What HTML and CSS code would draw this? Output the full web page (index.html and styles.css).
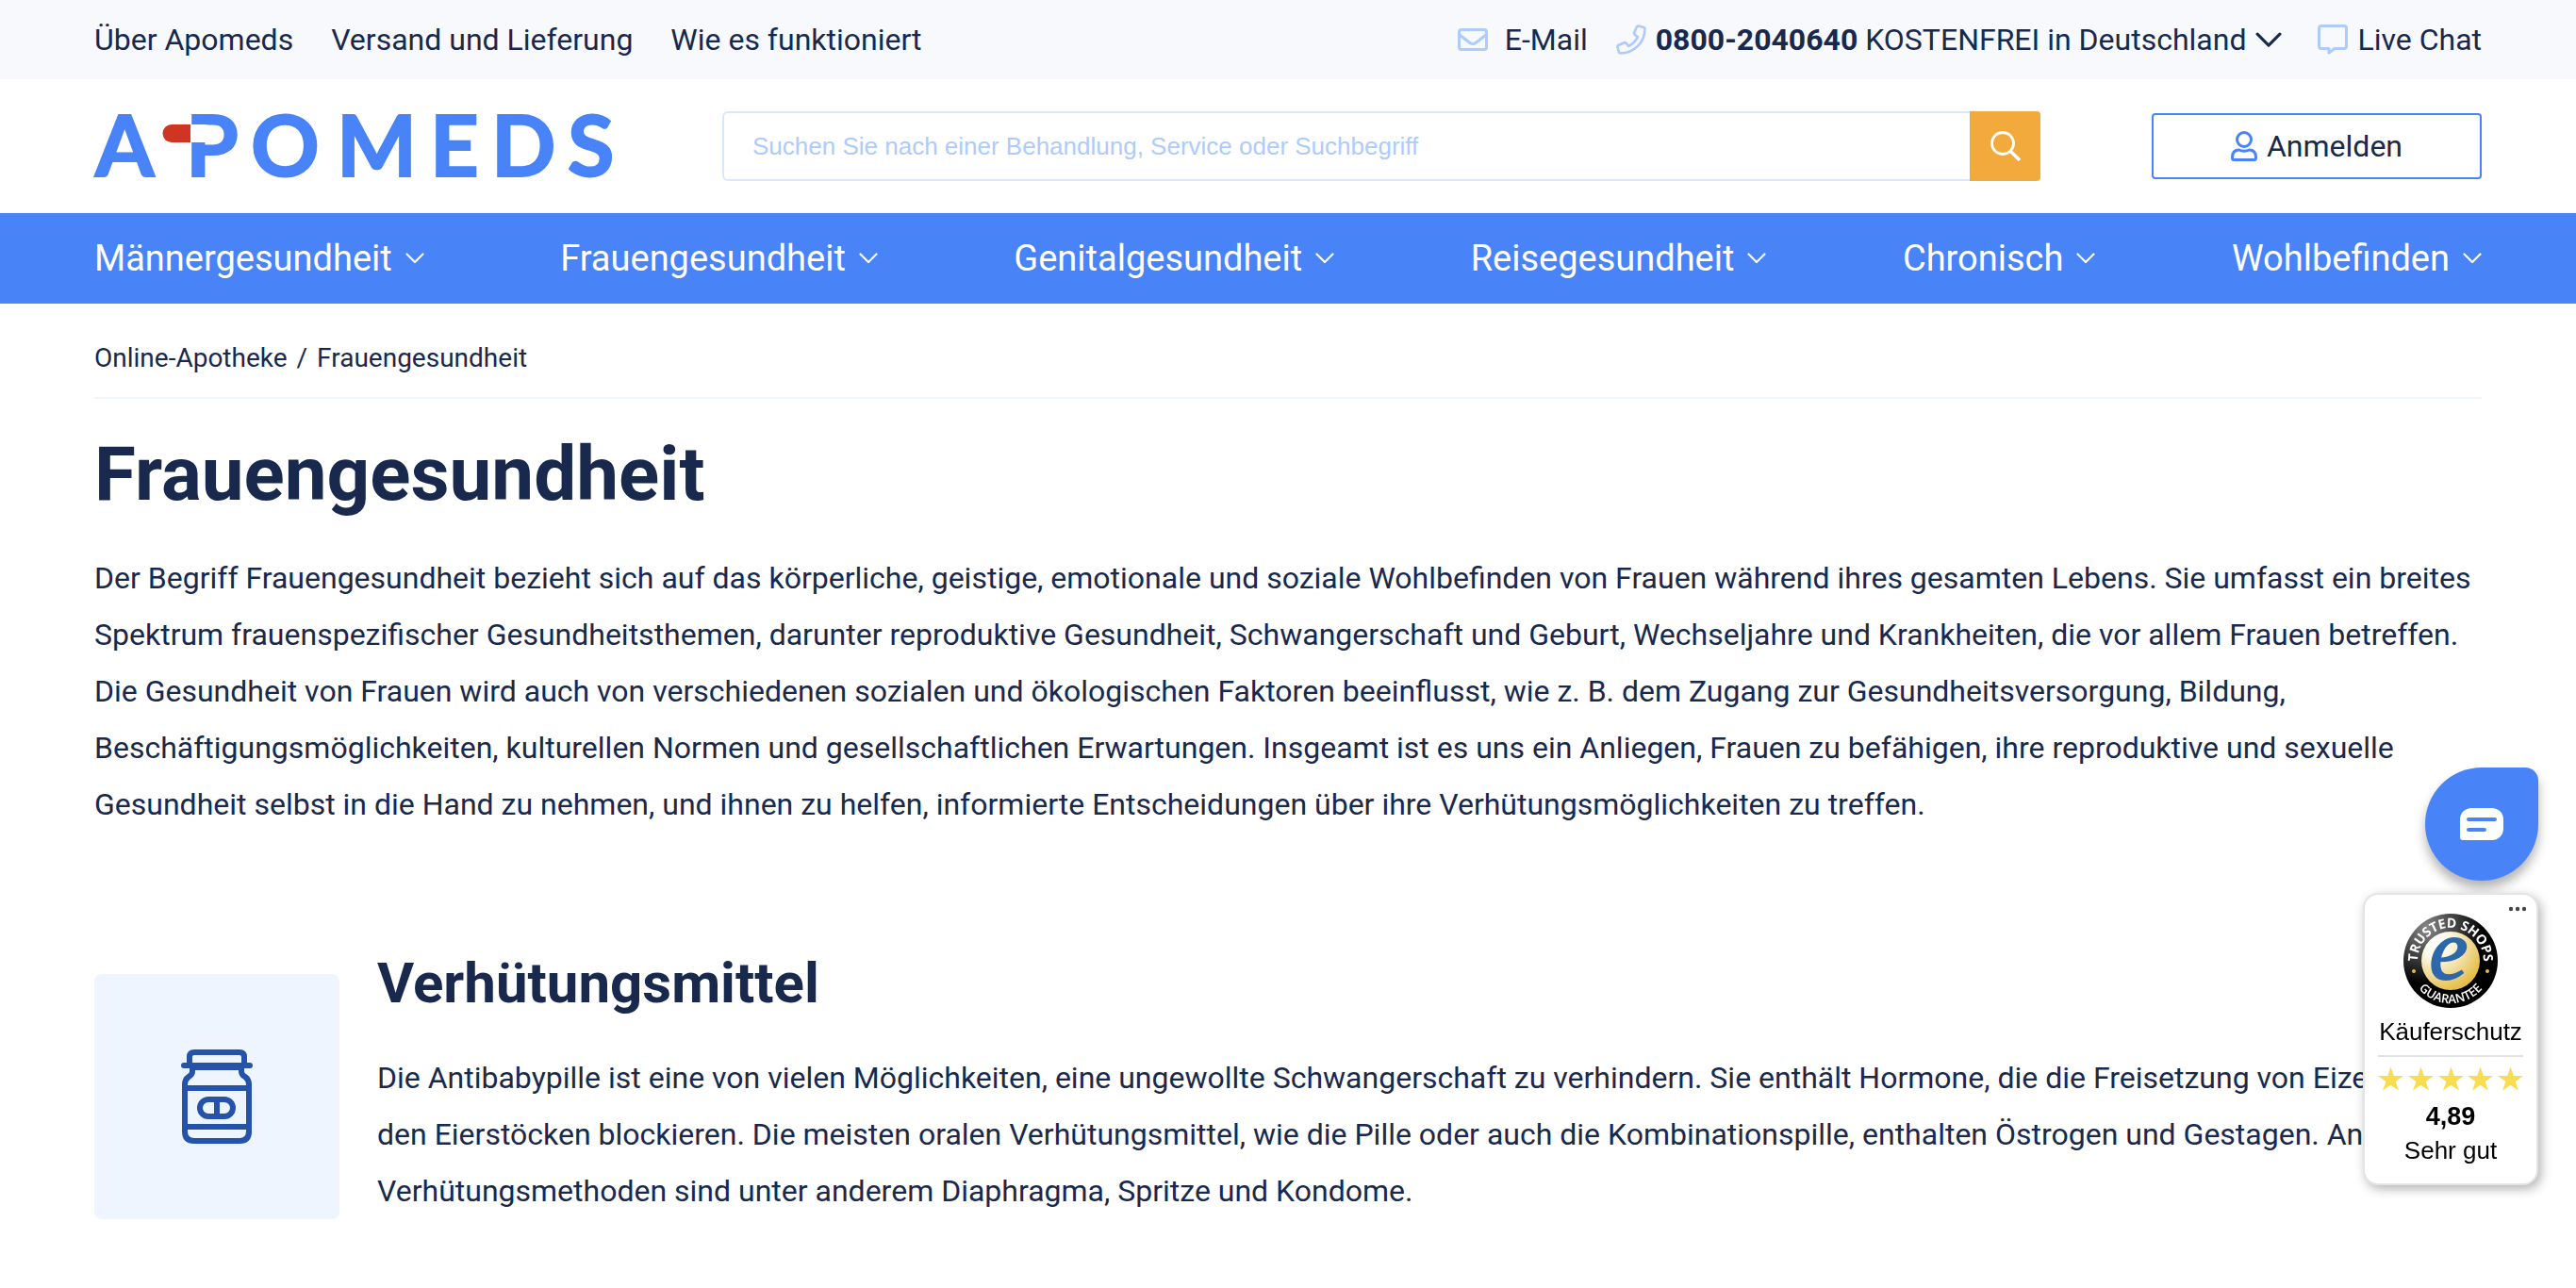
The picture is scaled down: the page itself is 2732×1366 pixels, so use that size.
FILE: index.html
```html
<!DOCTYPE html>
<html lang="de">
<head>
<meta charset="utf-8">
<meta name="viewport" content="width=device-width, initial-scale=1">
<title>Frauengesundheit | Apomeds</title>
<link rel="stylesheet" href="styles.css">
</head>
<body>
<svg class="sprite" aria-hidden="true">
  <symbol id="chevron" viewBox="0 0 20 12"><path d="M1.500 1.500L10 10l8.500-8.500" fill="none" stroke="currentColor" stroke-width="2.200" stroke-linecap="round" stroke-linejoin="round"/></symbol>
  <symbol id="star" viewBox="0 0 28 26"><path fill="#f9dc4f" d="M14 0l3.400 9.900H28l-8.600 6.200L22.700 26 14 19.900 5.300 26l3.300-9.900L0 9.900h10.600z"/></symbol>
</svg>
<header>
  <div class="topbar">
    <nav class="links" aria-label="Service">
      <a href="#">Über Apomeds</a>
      <a href="#">Versand und Lieferung</a>
      <a href="#">Wie es funktioniert</a>
    </nav>
    <div class="contact">
      <a class="mail" href="#">
        <svg width="32" height="24" viewBox="0 0 32 24" fill="none" stroke="currentColor" stroke-width="3"><rect x="1.500" y="1.500" width="29" height="21" rx="2.500"/><path d="M2 7l11 8.500q3 2 6 0L30 7"/></svg>
        E-Mail
      </a>
      <button class="phone" type="button">
        <svg width="32" height="32" viewBox="0 0 32 32" fill="none" stroke="currentColor" stroke-width="2.600" stroke-linejoin="round"><path d="M23.500 1.500l6 1.500q1 .3 1 1.500C30.500 19 19 30.500 4.500 30.500q-1.200 0-1.500-1l-1.500-6q-.2-1 .8-1.500l6.500-2.800q1-.4 1.600.4l2.800 3.400a22 22 0 0 0 9.800-9.800l-3.400-2.800q-.8-.6-.4-1.600L22 2.300q.4-1 1.500-.8z"/></svg>
        <span><b>0800-2040640</b> KOSTENFREI in Deutschland</span>
        <svg class="dark" width="28" height="17"><use href="#chevron"/></svg>
      </button>
      <a class="chat" href="#">
        <svg width="32" height="32" viewBox="0 0 32 32" fill="none" stroke="currentColor" stroke-width="3" stroke-linejoin="round"><path d="M4 1.500h24q2.500 0 2.500 2.500v19q0 2.500-2.500 2.500H18l-6 4.500v-4.500H4q-2.500 0-2.500-2.500V4Q1.500 1.500 4 1.500z"/></svg>
        Live Chat
      </a>
    </div>
  </div>
  <div class="masthead">
    <a class="logo" href="#" aria-label="Apomeds">
      <svg width="550" height="72" viewBox="0 0 550 72">
        <text class="wordmark" y="68" x="1 97 166 257 356 421 502">APOMEDS</text>
        <path fill="#fff" d="M101 13h16a9.500 9.500 0 0 1 0 19h-16z"/>
        <path fill="#cf3520" d="M102 13v19H82a9.500 9.500 0 0 1 0-19z"/>
      </svg>
    </a>
    <form class="search" role="search">
      <input type="search" aria-label="Suche" placeholder="Suchen Sie nach einer Behandlung, Service oder Suchbegriff">
      <button type="submit" aria-label="Suchen"><svg width="32" height="32" viewBox="0 0 32 32" fill="none" stroke="currentColor" stroke-width="2.800"><circle cx="13" cy="13" r="11.500"/><path stroke-width="3.400" d="M21.500 21.500l9.500 9.500"/></svg></button>
    </form>
    <button class="login" type="button">
      <svg width="28" height="32" viewBox="0 0 28 32" fill="none" stroke="currentColor" stroke-width="3"><circle cx="14" cy="9" r="7.500"/><path d="M8.500 20q5.500 2.500 11 0 7 0 7 8v.5q0 2-2 2h-21q-2 0-2-2V28q0-8 7-8z"/></svg>
      <span>Anmelden</span>
    </button>
  </div>
  <nav class="mainnav" aria-label="Hauptmenü">
    <a href="#">Männergesundheit <svg width="20" height="12"><use href="#chevron"/></svg></a>
    <a href="#">Frauengesundheit <svg width="20" height="12"><use href="#chevron"/></svg></a>
    <a href="#">Genitalgesundheit <svg width="20" height="12"><use href="#chevron"/></svg></a>
    <a href="#">Reisegesundheit <svg width="20" height="12"><use href="#chevron"/></svg></a>
    <a href="#">Chronisch <svg width="20" height="12"><use href="#chevron"/></svg></a>
    <a href="#">Wohlbefinden <svg width="20" height="12"><use href="#chevron"/></svg></a>
  </nav>
</header>
<main>
  <nav class="crumbs" aria-label="Brotkrumen"><a href="#">Online-Apotheke</a><span>/</span><span>Frauengesundheit</span></nav>
  <h1>Frauengesundheit</h1>
  <p>Der Begriff Frauengesundheit bezieht sich auf das körperliche, geistige, emotionale und soziale Wohlbefinden von Frauen während ihres gesamten Lebens. Sie umfasst ein breites Spektrum frauenspezifischer Gesundheitsthemen, darunter reproduktive Gesundheit, Schwangerschaft und Geburt, Wechseljahre und Krankheiten, die vor allem Frauen betreffen. Die Gesundheit von Frauen wird auch von verschiedenen sozialen und ökologischen Faktoren beeinflusst, wie z. B. dem Zugang zur Gesundheitsversorgung, Bildung, Beschäftigungsmöglichkeiten, kulturellen Normen und gesellschaftlichen Erwartungen. Insgeamt ist es uns ein Anliegen, Frauen zu befähigen, ihre reproduktive und sexuelle Gesundheit selbst in die Hand zu nehmen, und ihnen zu helfen, informierte Entscheidungen über ihre Verhütungsmöglichkeiten zu treffen.</p>
  <section class="category">
    <div class="tile">
      <svg width="76" height="100" viewBox="0 0 76 100" fill="none" stroke="currentColor" stroke-width="6" stroke-linejoin="round"><path d="M9 15V8q0-5 5-5h48q5 0 5 5v7"/><path stroke-linecap="round" d="M3 17h70"/><path d="M10 19h56M12 19v4q0 4-4 6-4 3-4 8v50q0 10 10 10h48q10 0 10-10V37q0-5-4-8-4-2-4-6v-4M4 41h68M4 82h68"/><rect x="20" y="53" width="35" height="18" rx="9"/><path d="M38 53v18"/></svg>
    </div>
    <div class="detail">
      <h2>Verhütungsmittel</h2>
      <p>Die Antibabypille ist eine von vielen Möglichkeiten, eine ungewollte Schwangerschaft zu verhindern. Sie enthält Hormone, die die Freisetzung von Eizellen aus den Eierstöcken blockieren. Die meisten oralen Verhütungsmittel, wie die Pille oder auch die Kombinationspille, enthalten Östrogen und Gestagen. Andere Verhütungsmethoden sind unter anderem Diaphragma, Spritze und Kondome.</p>
    </div>
  </section>
</main>
<aside class="floating">
  <button class="bubble" type="button" aria-label="Chat öffnen">
    <svg width="46" height="34" viewBox="0 0 46 34"><path fill="#fff" d="M12 0h22a12 12 0 0 1 12 12v10a12 12 0 0 1-12 12H3q-3 0-3-3V12A12 12 0 0 1 12 0z"/><path d="M9 12h28M9 23h17" stroke="#4883f8" stroke-width="4" stroke-linecap="round"/></svg>
  </button>
  <div class="trust">
    <button class="more" type="button" aria-label="Mehr"><svg width="20" height="6" viewBox="0 0 20 6" fill="#444"><circle cx="3" cy="3" r="2.200"/><circle cx="10" cy="3" r="2.200"/><circle cx="17" cy="3" r="2.200"/></svg></button>
    <svg class="seal" width="100" height="100" viewBox="0 0 100 100">
      <defs>
        <radialGradient id="ring" cx=".25" cy=".15" r=".6"><stop offset="0" stop-color="#888"/><stop offset="1" stop-color="#000"/></radialGradient>
        <radialGradient id="gold" cx=".25" cy=".2" r=".85"><stop offset="0" stop-color="#fff"/><stop offset=".3" stop-color="#fdf8e6"/><stop offset="1" stop-color="#e5bd48"/></radialGradient>
        <path id="arc-top" d="M19.700 67.500a35 35 0 1 1 60.600 0"/>
        <path id="arc-bottom" d="M5 50a45 45 0 0 0 90 0"/>
      </defs>
      <circle cx="50" cy="50" r="50" fill="url(#ring)"/><circle cx="50" cy="50" r="31" fill="url(#gold)"/>
      <text class="seal-top"><textPath href="#arc-top" startOffset="50%" text-anchor="middle">TRUSTED SHOPS</textPath></text>
      <text class="seal-bottom"><textPath href="#arc-bottom" startOffset="50%" text-anchor="middle">GUARANTEE</textPath></text>
      <circle cx="11" cy="61" r="2" fill="#e5bd48"/><circle cx="89" cy="61" r="2" fill="#e5bd48"/>
      <text class="seal-e" x="48" y="69" text-anchor="middle">e</text>
    </svg>
    <span>Käuferschutz</span>
    <div class="stars" role="img" aria-label="5 von 5 Sternen"><svg width="27" height="26"><use href="#star"/></svg><svg width="27" height="26"><use href="#star"/></svg><svg width="27" height="26"><use href="#star"/></svg><svg width="27" height="26"><use href="#star"/></svg><svg width="27" height="26"><use href="#star"/></svg></div>
    <b>4,89</b>
    <span>Sehr gut</span>
  </div>
</aside>
</body>
</html>
```
FILE: styles.css
```css
* { box-sizing: border-box; }
body {
  margin: 0;
  background: #fff;
  color: #18294d;
  font: 32px/60px Roboto, "Liberation Sans", sans-serif;
}
svg { display: block; flex: none; }
.sprite { position: absolute; width: 0; height: 0; }
a { color: inherit; text-decoration: none; }
button { margin: 0; padding: 0; border: 0; background: none; color: inherit; font: inherit; cursor: pointer; }
p { margin: 0; }

.topbar, .masthead, .mainnav { display: flex; align-items: center; justify-content: space-between; padding: 0 100px; }
.topbar { height: 84px; background: #f7f9fd; }
.links { display: flex; gap: 40px; }
.contact { display: flex; gap: 30px; }
.contact a, .phone { display: flex; align-items: center; gap: 10px; }
.contact svg { color: #adcbfc; }
.contact .mail { gap: 18px; }
.contact .dark { color: #18294d; }
.contact .chat { margin-left: 8px; }

.masthead { height: 142px; }
.logo svg { overflow: visible; }
.wordmark { fill: #4883f8; stroke: #4883f8; stroke-width: 2px; font: 700 90px Lato, sans-serif; }
.search { display: flex; flex: 1; height: 74px; margin: 0 118px 0 116px; }
.search input {
  flex: 1;
  min-width: 0;
  padding: 0 30px;
  border: 2px solid #dae7fd;
  border-right: 0;
  border-radius: 6px 0 0 6px;
  background: #fff;
  color: inherit;
  font: 26px/40px "Liberation Sans", Arial, sans-serif;
}
.search input::placeholder { color: #adcbfc; opacity: 1; }
.search button { display: grid; place-items: center; width: 75px; border-radius: 0 4px 4px 0; background: #f3aa3c; color: #fff; }
.login { display: flex; align-items: center; justify-content: center; gap: 10px; width: 350px; height: 70px; border: 2px solid #4883f8; border-radius: 4px; }
.login svg { color: #4883f8; }

.mainnav { height: 96px; background: #4883f8; color: #fff; font-size: 38px; }
.mainnav a { display: flex; align-items: center; gap: 14px; }

main { padding: 28px 100px 0; }
.crumbs { display: flex; gap: 10px; padding-bottom: 11px; border-bottom: 2px solid #eef5fe; font-size: 28px; }
h1, h2 { margin: 0; font-weight: 700; }
h1 { padding: 32px 0; font-size: 80px; line-height: 96px; }
.category { display: flex; align-items: flex-start; gap: 40px; padding-top: 124px; }
.tile { display: grid; flex: none; place-items: center; width: 260px; height: 260px; margin-top: 26px; border-radius: 8px; background: #eef5fe; color: #2553a9; }
h2 { padding-bottom: 34px; font-size: 60px; line-height: 72px; }

.floating { position: fixed; right: 40px; bottom: 109px; display: flex; flex-direction: column; align-items: flex-end; gap: 13px; }
.bubble { display: grid; place-items: center; width: 120px; height: 120px; border-radius: 60px 14px 60px 60px; background: #4883f8; box-shadow: 0 8px 12px rgba(0, 0, 0, .3); }
.trust {
  position: relative;
  display: flex;
  flex-direction: column;
  align-items: center;
  width: 186px;
  height: 310px;
  padding-top: 20px;
  border: 2px solid #e4e4e4;
  border-radius: 16px;
  background: #fff;
  box-shadow: 3px 4px 12px rgba(0, 0, 0, .3);
  color: #000;
  font: 26px/36px "Liberation Sans", Arial, sans-serif;
}
.more { position: absolute; top: 12px; right: 10px; }
.seal + span { padding: 7px 0; }
.stars { display: flex; justify-content: space-between; width: 154px; padding: 10px 0 9px; border-top: 2px solid #e2e2e2; }
.trust b { font-size: 27px; }
.seal-top { fill: #fff; font: 700 14px "Open Sans", sans-serif; }
.seal-bottom { fill: #fff; font: 600 13px "Open Sans", sans-serif; }
.seal-e { fill: #2c68ab; stroke: #2c68ab; stroke-width: 2px; font: italic 400 92px "Liberation Serif", serif; }
```
